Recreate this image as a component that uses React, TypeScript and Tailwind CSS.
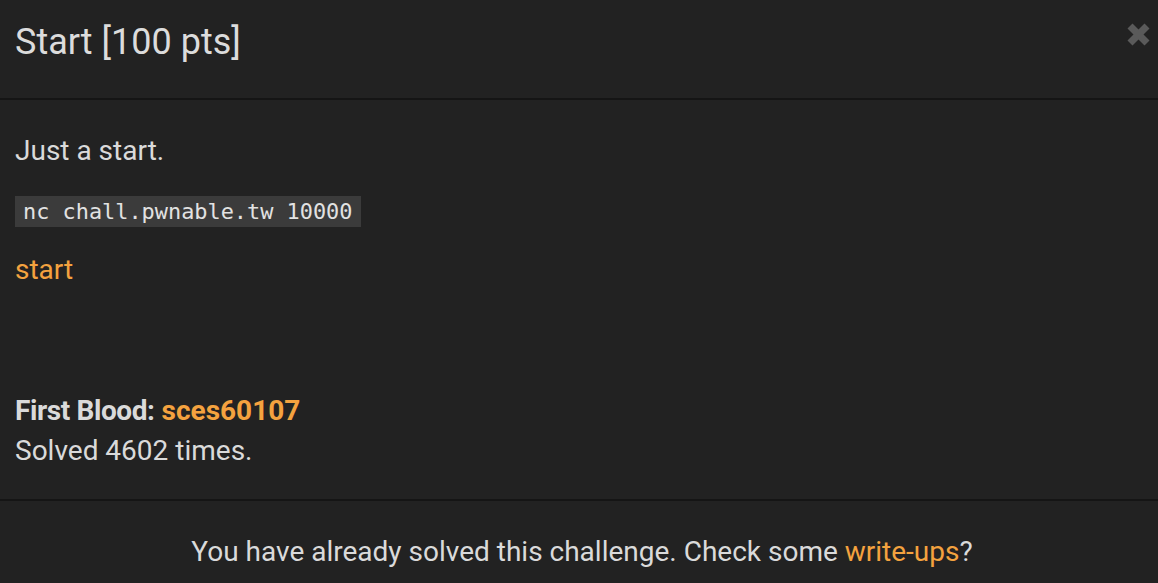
import React from "react";

export default function App() {
  return (
    <div className="w-[1158px] h-[583px] bg-[#222222] text-[#dadada] overflow-hidden" style={{ fontFamily: "Roboto, 'Liberation Sans', sans-serif" }}>
      <div className="h-[100px] border-b-2 border-[#151515] px-[15px] pt-[17px] relative">
        <h4 className="text-[36px] leading-[50px] text-[#dcdcdc]">Start [100 pts]</h4>
        <svg className="absolute left-[1126px] top-[22px]" width="25" height="25" viewBox="0 0 25 25">
          <line x1="4" y1="4" x2="21" y2="21" stroke="#5a5a5a" strokeWidth="7" />
          <line x1="21" y1="4" x2="4" y2="21" stroke="#5a5a5a" strokeWidth="7" />
        </svg>
      </div>
      <div className="h-[401px] border-b-2 border-[#151515] px-[15px] pt-[31px]">
        <p className="text-[28px] leading-[40px]">Just a start.</p>
        <div className="mt-[25px] flex">
          <code className="block bg-[#3b3b3b] text-[#e2e2e2] pl-[8px] pr-[9px] text-[21.9px] leading-[31px]" style={{ fontFamily: "'DejaVu Sans Mono', monospace" }}>nc chall.pwnable.tw 10000</code>
        </div>
        <div className="mt-[23px] text-[28px] leading-[40px] text-[#f4a23f]">start</div>
        <div className="mt-[101px] text-[28px] leading-[40px]">
          <div><span className="font-bold tracking-[-0.4px]">First Blood:</span> <span className="font-bold text-[#f4a23f]">sces60107</span></div>
          <div>Solved 4602 times.</div>
        </div>
      </div>
      <div className="text-center pt-[31px] pl-[6px] text-[28px] leading-[40px]">
        You have already solved this challenge. Check some <span className="text-[#f4a23f]">write-ups</span>?
      </div>
    </div>
  );
}
